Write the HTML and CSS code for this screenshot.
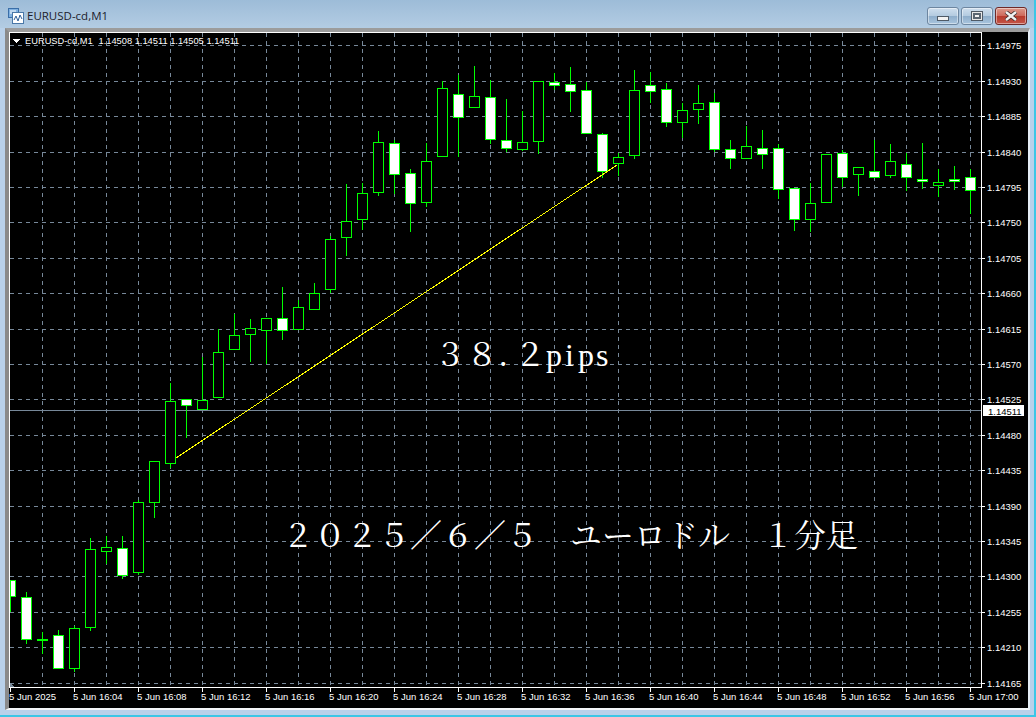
FILE: index.html
```html
<!DOCTYPE html>
<html lang="ja">
<head>
<meta charset="utf-8">
<title>EURUSD-cd,M1</title>
<link rel="stylesheet" href="styles.css">
</head>
<body>
<div class="window">
  <header class="titlebar">
    <svg class="app-icon" viewBox="0 0 16 16" width="16" height="16">
      <rect x="0.5" y="0.5" width="10" height="9" fill="#7fb0e0" stroke="#3a6ea8"/>
      <rect x="4.5" y="4.5" width="11" height="11" fill="#fff" stroke="#4a78a8"/>
      <path d="M6 12l2-4 2 5 2-6 2 4" fill="none" stroke="#2f5f98"/>
      <path d="M2 3h6M2 5h2" stroke="#fff"/>
    </svg>
    <span class="title">EURUSD-cd,M1</span>
    <div class="caption">
      <div class="btn"><span class="glyph-min"></span></div>
      <div class="btn"><span class="glyph-max"></span></div>
      <div class="btn btn-close"><svg viewBox="0 0 14 10" width="14" height="10"><path d="M2 1l10 8M12 1L2 9" stroke="#3a2a2a" stroke-width="4"/><path d="M2 1l10 8M12 1L2 9" stroke="#f2f2f2" stroke-width="2.4"/></svg></div>
    </div>
  </header>
  <main class="frame">
    <svg class="chart" viewBox="9 32 1019 676" width="1019" height="676">
      <path class="grid" d="M10 45.5H981M10 81.5H981M10 116.5H981M10 152.5H981M10 187.5H981M10 222.5H981M10 258.5H981M10 293.5H981M10 329.5H981M10 364.5H981M10 399.5H981M10 435.5H981M10 470.5H981M10 506.5H981M10 541.5H981M10 576.5H981M10 612.5H981M10 647.5H981M10 683.5H981"/>
      <path class="grid" d="M42.5 33V687M74.5 33V687M106.5 33V687M138.5 33V687M170.5 33V687M202.5 33V687M234.5 33V687M266.5 33V687M298.5 33V687M330.5 33V687M362.5 33V687M394.5 33V687M426.5 33V687M458.5 33V687M490.5 33V687M522.5 33V687M554.5 33V687M586.5 33V687M618.5 33V687M650.5 33V687M682.5 33V687M714.5 33V687M746.5 33V687M778.5 33V687M810.5 33V687M842.5 33V687M874.5 33V687M906.5 33V687M938.5 33V687M970.5 33V687"/>
      <path class="bid" d="M10 410.5H981"/>

      <path class="wick" d="M10.5 596V612M26.5 592V644M42.5 632V654M58.5 630V636M74.5 626V672M90.5 538V631M106.5 536V564M122.5 536V579M138.5 500V575M154.5 461V518M170.5 383V468M186.5 399V438M202.5 357V410M218.5 329V398M234.5 314V350M250.5 319V362M266.5 318V364M282.5 287V340M298.5 300V330M314.5 283V310M330.5 236V293M346.5 184V256M362.5 183V230M378.5 131V196M394.5 140V194M410.5 169V232M426.5 143V207M442.5 81V157M458.5 75V157M474.5 66V108M490.5 80V144M506.5 99V152M522.5 111V151M538.5 81V154M554.5 73V90M570.5 67V112M586.5 82V134M602.5 133V178M618.5 153V176M634.5 70V159M650.5 72V103M666.5 83V127M682.5 103V138M698.5 85V124M714.5 93V152M730.5 140V169M746.5 126V159M762.5 130V169M778.5 144V199M794.5 188V231M810.5 183V232M826.5 154V203M842.5 150V187M858.5 167V196M874.5 140V178M890.5 144V178M906.5 153V191M922.5 143V189M938.5 169V197M954.5 166V190M970.5 169V214"/>

      <rect class="bear" x="10.5" y="580.5" width="5" height="16"/>
      <rect class="bear" x="21.5" y="597.5" width="10" height="42"/>
      <rect class="bear" x="37.5" y="639.5" width="10" height="1"/>
      <rect class="bear" x="53.5" y="635.5" width="10" height="33"/>
      <rect class="bull" x="69.5" y="628.5" width="10" height="40"/>
      <rect class="bull" x="85.5" y="549.5" width="10" height="78"/>
      <rect class="bull" x="101.5" y="547.5" width="10" height="4"/>
      <rect class="bear" x="117.5" y="548.5" width="10" height="27"/>
      <rect class="bull" x="133.5" y="502.5" width="10" height="70"/>
      <rect class="bull" x="149.5" y="461.5" width="10" height="41"/>
      <rect class="bull" x="165.5" y="401.5" width="10" height="62"/>
      <rect class="bear" x="181.5" y="399.5" width="10" height="6"/>
      <rect class="bull" x="197.5" y="400.5" width="10" height="9"/>
      <rect class="bull" x="213.5" y="352.5" width="10" height="45"/>
      <rect class="bull" x="229.5" y="335.5" width="10" height="14"/>
      <rect class="bull" x="245.5" y="328.5" width="10" height="6"/>
      <rect class="bull" x="261.5" y="318.5" width="10" height="12"/>
      <rect class="bear" x="277.5" y="318.5" width="10" height="12"/>
      <rect class="bull" x="293.5" y="307.5" width="10" height="22"/>
      <rect class="bull" x="309.5" y="293.5" width="10" height="16"/>
      <rect class="bull" x="325.5" y="239.5" width="10" height="50"/>
      <rect class="bull" x="341.5" y="221.5" width="10" height="16"/>
      <rect class="bull" x="357.5" y="193.5" width="10" height="26"/>
      <rect class="bull" x="373.5" y="142.5" width="10" height="50"/>
      <rect class="bear" x="389.5" y="143.5" width="10" height="31"/>
      <rect class="bear" x="405.5" y="173.5" width="10" height="30"/>
      <rect class="bull" x="421.5" y="161.5" width="10" height="41"/>
      <rect class="bull" x="437.5" y="88.5" width="10" height="68"/>
      <rect class="bear" x="453.5" y="94.5" width="10" height="23"/>
      <rect class="bull" x="469.5" y="96.5" width="10" height="11"/>
      <rect class="bear" x="485.5" y="97.5" width="10" height="42"/>
      <rect class="bear" x="501.5" y="140.5" width="10" height="8"/>
      <rect class="bull" x="517.5" y="142.5" width="10" height="7"/>
      <rect class="bull" x="533.5" y="81.5" width="10" height="60"/>
      <rect class="bear" x="549.5" y="82.5" width="10" height="3"/>
      <rect class="bear" x="565.5" y="84.5" width="10" height="7"/>
      <rect class="bear" x="581.5" y="90.5" width="10" height="43"/>
      <rect class="bear" x="597.5" y="134.5" width="10" height="37"/>
      <rect class="bull" x="613.5" y="157.5" width="10" height="6"/>
      <rect class="bull" x="629.5" y="90.5" width="10" height="65"/>
      <rect class="bear" x="645.5" y="85.5" width="10" height="6"/>
      <rect class="bear" x="661.5" y="89.5" width="10" height="33"/>
      <rect class="bull" x="677.5" y="110.5" width="10" height="12"/>
      <rect class="bull" x="693.5" y="103.5" width="10" height="6"/>
      <rect class="bear" x="709.5" y="102.5" width="10" height="47"/>
      <rect class="bear" x="725.5" y="149.5" width="10" height="9"/>
      <rect class="bull" x="741.5" y="146.5" width="10" height="12"/>
      <rect class="bear" x="757.5" y="148.5" width="10" height="6"/>
      <rect class="bear" x="773.5" y="148.5" width="10" height="41"/>
      <rect class="bear" x="789.5" y="188.5" width="10" height="31"/>
      <rect class="bull" x="805.5" y="203.5" width="10" height="16"/>
      <rect class="bull" x="821.5" y="154.5" width="10" height="48"/>
      <rect class="bear" x="837.5" y="153.5" width="10" height="24"/>
      <rect class="bull" x="853.5" y="167.5" width="10" height="7"/>
      <rect class="bear" x="869.5" y="171.5" width="10" height="6"/>
      <rect class="bull" x="885.5" y="161.5" width="10" height="14"/>
      <rect class="bear" x="901.5" y="164.5" width="10" height="13"/>
      <rect class="bear" x="917.5" y="179.5" width="10" height="2"/>
      <rect class="bull" x="933.5" y="182.5" width="10" height="3"/>
      <rect class="bear" x="949.5" y="179.5" width="10" height="2"/>
      <rect class="bear" x="965.5" y="177.5" width="10" height="13"/>

      <path class="trend" d="M176 458L617 165"/>

      <path class="frame-line" d="M9.5 32.5H981.5V687.5H9.5Z"/>
      <path class="tick" d="M982 45.5H985M982 81.5H985M982 116.5H985M982 152.5H985M982 187.5H985M982 222.5H985M982 258.5H985M982 293.5H985M982 329.5H985M982 364.5H985M982 399.5H985M982 435.5H985M982 470.5H985M982 506.5H985M982 541.5H985M982 576.5H985M982 612.5H985M982 647.5H985M982 683.5H985"/>
      <path class="tick" d="M10.5 688V692M74.5 688V692M138.5 688V692M202.5 688V692M266.5 688V692M330.5 688V692M394.5 688V692M458.5 688V692M522.5 688V692M586.5 688V692M650.5 688V692M714.5 688V692M778.5 688V692M842.5 688V692M906.5 688V692M970.5 688V692"/>

      <path class="mark" d="M13 39H20L16.5 43Z"/>
      <path class="corner" d="M10 683L15 687H10Z"/>

      <text class="label label-head" x="25" y="43.5">EURUSD-cd,M1</text>
      <text class="label label-head" x="98.5" y="43.5">1.14508 1.14511 1.14505 1.14511</text>

      <g class="label">
        <text x="987" y="49">1.14975</text>
        <text x="987" y="85">1.14930</text>
        <text x="987" y="120">1.14885</text>
        <text x="987" y="156">1.14840</text>
        <text x="987" y="191">1.14795</text>
        <text x="987" y="226">1.14750</text>
        <text x="987" y="262">1.14705</text>
        <text x="987" y="297">1.14660</text>
        <text x="987" y="333">1.14615</text>
        <text x="987" y="368">1.14570</text>
        <text x="987" y="403">1.14525</text>
        <text x="987" y="439">1.14480</text>
        <text x="987" y="474">1.14435</text>
        <text x="987" y="510">1.14390</text>
        <text x="987" y="545">1.14345</text>
        <text x="987" y="580">1.14300</text>
        <text x="987" y="616">1.14255</text>
        <text x="987" y="651">1.14210</text>
        <text x="987" y="687">1.14165</text>
        <text x="9" y="700">5 Jun 2025</text>
        <text x="73" y="700">5 Jun 16:04</text>
        <text x="137" y="700">5 Jun 16:08</text>
        <text x="201" y="700">5 Jun 16:12</text>
        <text x="265" y="700">5 Jun 16:16</text>
        <text x="329" y="700">5 Jun 16:20</text>
        <text x="393" y="700">5 Jun 16:24</text>
        <text x="457" y="700">5 Jun 16:28</text>
        <text x="521" y="700">5 Jun 16:32</text>
        <text x="585" y="700">5 Jun 16:36</text>
        <text x="649" y="700">5 Jun 16:40</text>
        <text x="713" y="700">5 Jun 16:44</text>
        <text x="777" y="700">5 Jun 16:48</text>
        <text x="841" y="700">5 Jun 16:52</text>
        <text x="905" y="700">5 Jun 16:56</text>
        <text x="969" y="700">5 Jun 17:00</text>
      </g>

      <rect class="bid-box" x="983" y="405" width="41" height="11"/>
      <text class="bid-text" x="988" y="414.5">1.14511</text>

      <text class="note" x="434 466 498 514" y="366">３８.２<tspan class="note-latin" x="546 565 578 596">pips</tspan></text>
      <text class="note" x="282" y="547">２０２５／６／５　ユーロドル　１分足</text>
    </svg>
  </main>
</div>
</body>
</html>
```

FILE: styles.css
```css
html, body {
  margin: 0;
  padding: 0;
  background: #b9d1ea;
}

.window {
  box-sizing: border-box;
  width: 1036px;
  height: 717px;
  display: flex;
  flex-direction: column;
  overflow: hidden;
  background: #b9d1ea;
  border-right: 2px solid #3cc6e6;
  border-bottom: 2px solid #3cc6e6;
}

.titlebar {
  box-sizing: border-box;
  height: 28px;
  flex: none;
  display: flex;
  align-items: center;
  padding: 0 7px 0 8px;
  background: linear-gradient(to bottom, #9dbcd8 0%, #b3cce3 100%);
}

.app-icon {
  flex: none;
  margin-top: 3px;
}

.title {
  margin: 3px 0 0 3px;
  font: 11.5px "Open Sans", "Liberation Sans", sans-serif;
  color: #1c1c2c;
}

.caption {
  margin-left: auto;
  margin-top: 4px;
  display: flex;
  gap: 2px;
}

.btn {
  box-sizing: border-box;
  width: 32px;
  height: 18px;
  display: flex;
  align-items: center;
  justify-content: center;
  border: 1px solid #6d86a0;
  border-radius: 3px;
  background: linear-gradient(to bottom, #cfdfee 0%, #b4cbe0 48%, #8faecb 52%, #a9c5de 100%);
  box-shadow: inset 0 0 0 1px rgba(255, 255, 255, .45);
}

.btn-close {
  border-color: #6e2a28;
  background: linear-gradient(to bottom, #dc9a8c 0%, #ce6a5c 48%, #b83a2c 52%, #c45648 100%);
}

.glyph-min {
  display: block;
  width: 10px;
  height: 3px;
  margin-top: 4px;
  background: #f2f2f2;
  border: 1px solid #4f5a66;
}

.glyph-max {
  display: block;
  box-sizing: border-box;
  width: 12px;
  height: 10px;
  background: #f2f2f2;
  border: 1px solid #4f5a66;
  box-shadow: inset 0 0 0 1px #e8e8e8, inset 0 0 0 3px #5a6672;
}

.frame {
  flex: none;
  width: 1019px;
  height: 676px;
  margin: 0 0 0 5px;
  padding: 0;
  border-style: solid;
  border-width: 4px 2px 2px 4px;
  border-color: #9c9c9c #e6eef6 #f4f6f8 #8a8a8a;
  background: #000;
}

.chart {
  display: block;
  background: #000;
  shape-rendering: crispEdges;
}

.grid {
  fill: none;
  stroke: #778899;
  stroke-width: 1;
  stroke-dasharray: 4 4;
}

.bid {
  fill: none;
  stroke: #778899;
  stroke-width: 1;
}

.wick {
  fill: none;
  stroke: #00ff00;
  stroke-width: 1;
}

.bull {
  fill: #000;
  stroke: #00ff00;
  stroke-width: 1;
}

.bear {
  fill: #fff;
  stroke: #00ff00;
  stroke-width: 1;
}

.trend {
  fill: none;
  stroke: #ffff00;
  stroke-width: 1;
}

.frame-line,
.tick {
  fill: none;
  stroke: #fff;
  stroke-width: 1;
}

.mark {
  fill: #fff;
}

.corner {
  fill: #778899;
}

.label {
  font: 9.5px "Liberation Sans", sans-serif;
  fill: #fff;
}

.label-head {
  font-size: 9.3px;
}

.bid-box {
  fill: #fff;
}

.bid-text {
  font: 9.5px "Liberation Sans", sans-serif;
  fill: #000;
}

.note {
  font: 32px "Noto Serif CJK JP", "Noto Sans CJK JP", serif;
  fill: #fff;
}

.note-latin {
  font-family: "Liberation Serif", serif;
}
```
